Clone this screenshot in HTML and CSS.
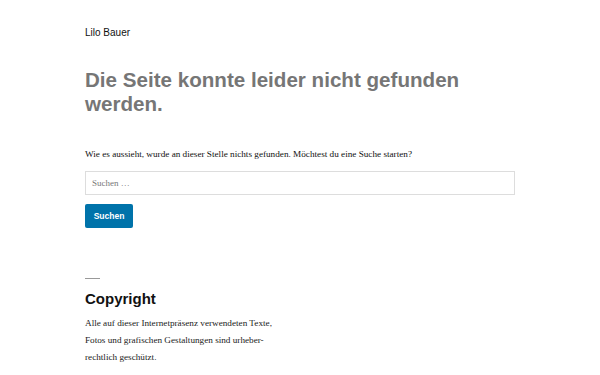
FILE: index.html
```html
<!DOCTYPE html>
<html lang="de">
<head>
    <meta charset="UTF-8">
    <meta name="viewport" content="width=device-width, initial-scale=1.0">
    <title>Seite nicht gefunden – Lilo Bauer</title>
    <link rel="stylesheet" href="styles.css">
</head>
<body>
    <div class="site">
        <header class="site-header">
            <p class="site-title">Lilo Bauer</p>
        </header>

        <main class="site-main">
            <h1 class="page-title">Die Seite konnte leider nicht gefunden werden.</h1>

            <p class="intro">Wie es aussieht, wurde an dieser Stelle nichts gefunden. Möchtest du eine Suche starten?</p>

            <form class="search-form">
                <input type="search" class="search-field" placeholder="Suchen …">
                <button type="button" class="search-submit">Suchen</button>
            </form>
        </main>

        <footer class="widget-area">
            <section class="widget">
                <hr class="widget-sep">
                <h2 class="widget-title">Copyright</h2>
                <p class="widget-text">Alle auf dieser Internetpräsenz verwendeten Texte, Fotos und grafischen Gestaltungen sind urheber-rechtlich geschützt.</p>
            </section>
        </footer>
    </div>
</body>
</html>
```

FILE: styles.css
```css
body {
    margin: 0;
    padding: 0;
    background: #fff;
    color: #28303d;
    font-family: "Liberation Serif", "Times New Roman", serif;
}

.site {
    width: 430px;
    margin: 0 auto;
}

.site-header {
    padding-top: 27px;
}

.site-title {
    margin: 0;
    font-family: "Liberation Sans", Arial, sans-serif;
    font-size: 10px;
    line-height: 12px;
    color: #111;
}

.site-main {
    padding-top: 29px;
}

.page-title {
    margin: 0;
    font-family: "Liberation Sans", Arial, sans-serif;
    font-size: 20.6px;
    line-height: 24px;
    font-weight: 700;
    color: #767676;
}

.intro {
    margin: 31px 0 0;
    font-size: 9.2px;
    line-height: 14px;
    color: #111;
}

.search-form {
    margin-top: 10px;
}

.search-field {
    display: block;
    box-sizing: border-box;
    width: 100%;
    height: 24px;
    margin: 0;
    padding: 0 6px;
    border: 1px solid #ddd;
    border-radius: 0;
    font-family: "Liberation Serif", "Times New Roman", serif;
    font-size: 9px;
    color: #333;
    outline: none;
}

.search-field::placeholder {
    color: #777;
}

.search-submit {
    display: block;
    margin-top: 9px;
    width: 48px;
    height: 24px;
    padding: 0;
    border: none;
    border-radius: 2px;
    background: #0073aa;
    color: #fff;
    font-family: "Liberation Sans", Arial, sans-serif;
    font-size: 8.5px;
    font-weight: 700;
    cursor: pointer;
}

.widget-area {
    padding-top: 50px;
}

.widget-sep {
    width: 15px;
    margin: 0;
    border: none;
    border-top: 1px solid #999;
}

.widget-title {
    margin: 11px 0 0;
    font-family: "Liberation Sans", Arial, sans-serif;
    font-size: 15px;
    line-height: 18px;
    font-weight: 700;
    color: #111;
}

.widget-text {
    width: 195px;
    margin: 7px 0 0;
    font-size: 9.2px;
    line-height: 17px;
    color: #222;
}
```
